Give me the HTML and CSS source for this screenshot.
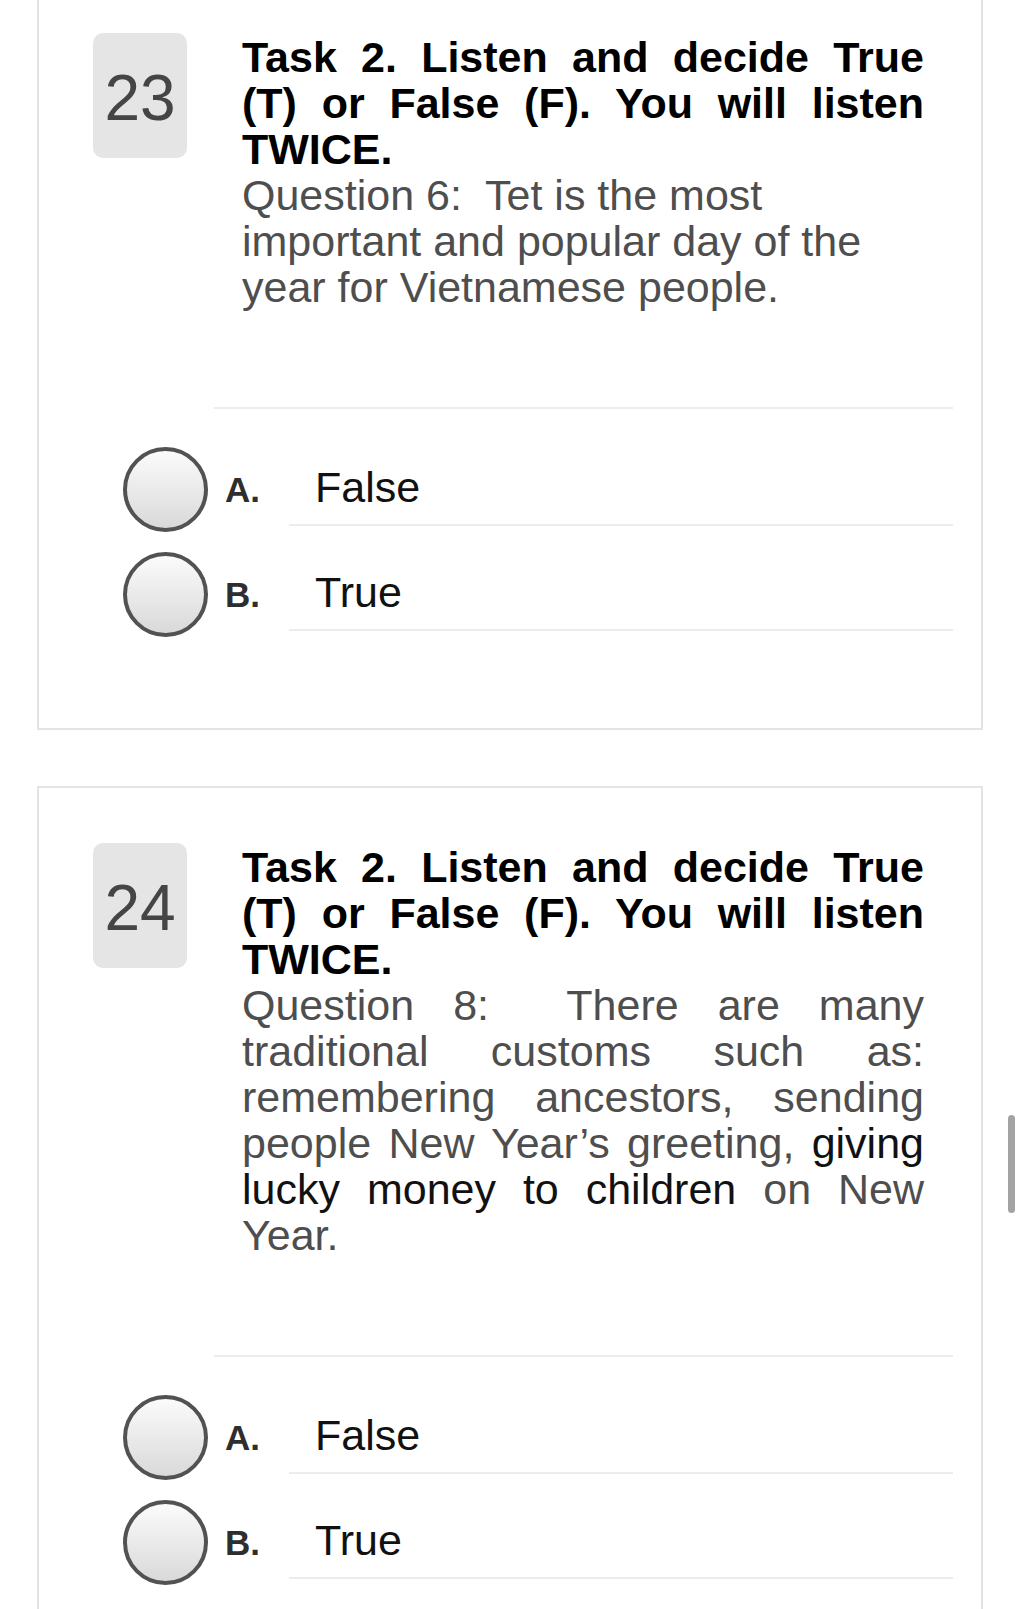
FILE: index.html
```html
<!DOCTYPE html>
<html lang="en">
<head>
<meta charset="utf-8">
<title>Quiz</title>
<link rel="stylesheet" href="styles.css">
</head>
<body>
<div class="page">
  <section class="card">
    <div class="q-head">
      <div class="badge">23</div>
      <div class="q-text">
        <p class="q-title">Task 2. Listen and decide True (T) or False (F). You will listen TWICE.</p>
        <p class="q-body">Question 6:&nbsp; Tet is the most important and popular day of the year for Vietnamese people.</p>
      </div>
    </div>
    <div class="sep"></div>
    <div class="options">
      <div class="option">
        <span class="radio"></span>
        <div class="opt-body">
          <span class="opt-letter">A.</span>
          <span class="opt-text">False</span>
        </div>
      </div>
      <div class="option">
        <span class="radio"></span>
        <div class="opt-body">
          <span class="opt-letter">B.</span>
          <span class="opt-text">True</span>
        </div>
      </div>
    </div>
  </section>

  <section class="card">
    <div class="q-head">
      <div class="badge">24</div>
      <div class="q-text">
        <p class="q-title">Task 2. Listen and decide True (T) or False (F). You will listen TWICE.</p>
        <p class="q-body q-justify">Question 8:&nbsp; There are many traditional customs such as: remembering ancestors, sending people New Year’s greeting, <span class="dark">giving lucky money to children</span> on New Year.</p>
      </div>
    </div>
    <div class="sep"></div>
    <div class="options">
      <div class="option">
        <span class="radio"></span>
        <div class="opt-body">
          <span class="opt-letter">A.</span>
          <span class="opt-text">False</span>
        </div>
      </div>
      <div class="option">
        <span class="radio"></span>
        <div class="opt-body">
          <span class="opt-letter">B.</span>
          <span class="opt-text">True</span>
        </div>
      </div>
    </div>
  </section>
</div>
<div class="scroll-thumb"></div>
</body>
</html>
```
FILE: styles.css
```css
html, body {
  margin: 0;
  padding: 0;
  background: #ffffff;
}

body {
  font-family: "Liberation Sans", Arial, sans-serif;
  color: #111111;
  overflow: hidden;
}

.page {
  margin-top: -24px;
  display: flex;
  flex-direction: column;
  gap: 56px;
}

.card {
  box-sizing: border-box;
  width: 946px;
  margin-left: 37px;
  border: 2px solid #e4e4e4;
  background: #ffffff;
  padding: 55px 0 91px 0;
}

.q-head {
  display: flex;
  align-items: flex-start;
}

.badge {
  flex: none;
  width: 94px;
  height: 125px;
  margin-left: 54px;
  margin-right: 55px;
  background: #e5e5e5;
  border-radius: 10px;
  color: #454545;
  font-size: 64px;
  display: flex;
  align-items: center;
  justify-content: center;
  padding-top: 4px;
  box-sizing: border-box;
}

.q-text {
  width: 682px;
  padding-top: 1px;
}

.q-title {
  margin: 0;
  font-size: 43px;
  line-height: 46px;
  font-weight: bold;
  color: #000000;
  text-align: justify;
}

.q-body {
  margin: 0;
  font-size: 43px;
  line-height: 46px;
  color: #4e4e4e;
}

.q-justify {
  text-align: justify;
}

.dark {
  color: #111111;
}

.sep {
  height: 2px;
  background: #ececec;
  margin: 97px 28px 0 175px;
}

.options {
  margin-top: 38px;
  display: flex;
  flex-direction: column;
  gap: 20px;
}

.option {
  display: flex;
  align-items: flex-start;
  padding-left: 84px;
  padding-right: 28px;
}

.radio {
  flex: none;
  box-sizing: border-box;
  width: 85px;
  height: 85px;
  border-radius: 50%;
  border: 4px solid #525252;
  background: linear-gradient(#fbfbfb, #d9d9d9);
}

.opt-body {
  flex: 1;
  display: flex;
  align-items: baseline;
  padding-top: 17px;
}

.opt-letter {
  flex: none;
  box-sizing: border-box;
  width: 81px;
  padding-left: 17px;
  font-size: 35px;
  line-height: 46px;
  font-weight: bold;
  color: #2e2e2e;
}

.opt-text {
  flex: 1;
  font-size: 43px;
  line-height: 46px;
  color: #111111;
  padding-left: 26px;
  padding-bottom: 14px;
  border-bottom: 2px solid #ececec;
}

.scroll-thumb {
  position: fixed;
  right: 9px;
  top: 1115px;
  width: 7px;
  height: 98px;
  border-radius: 4px;
  background: #a3a3a3;
}
```
